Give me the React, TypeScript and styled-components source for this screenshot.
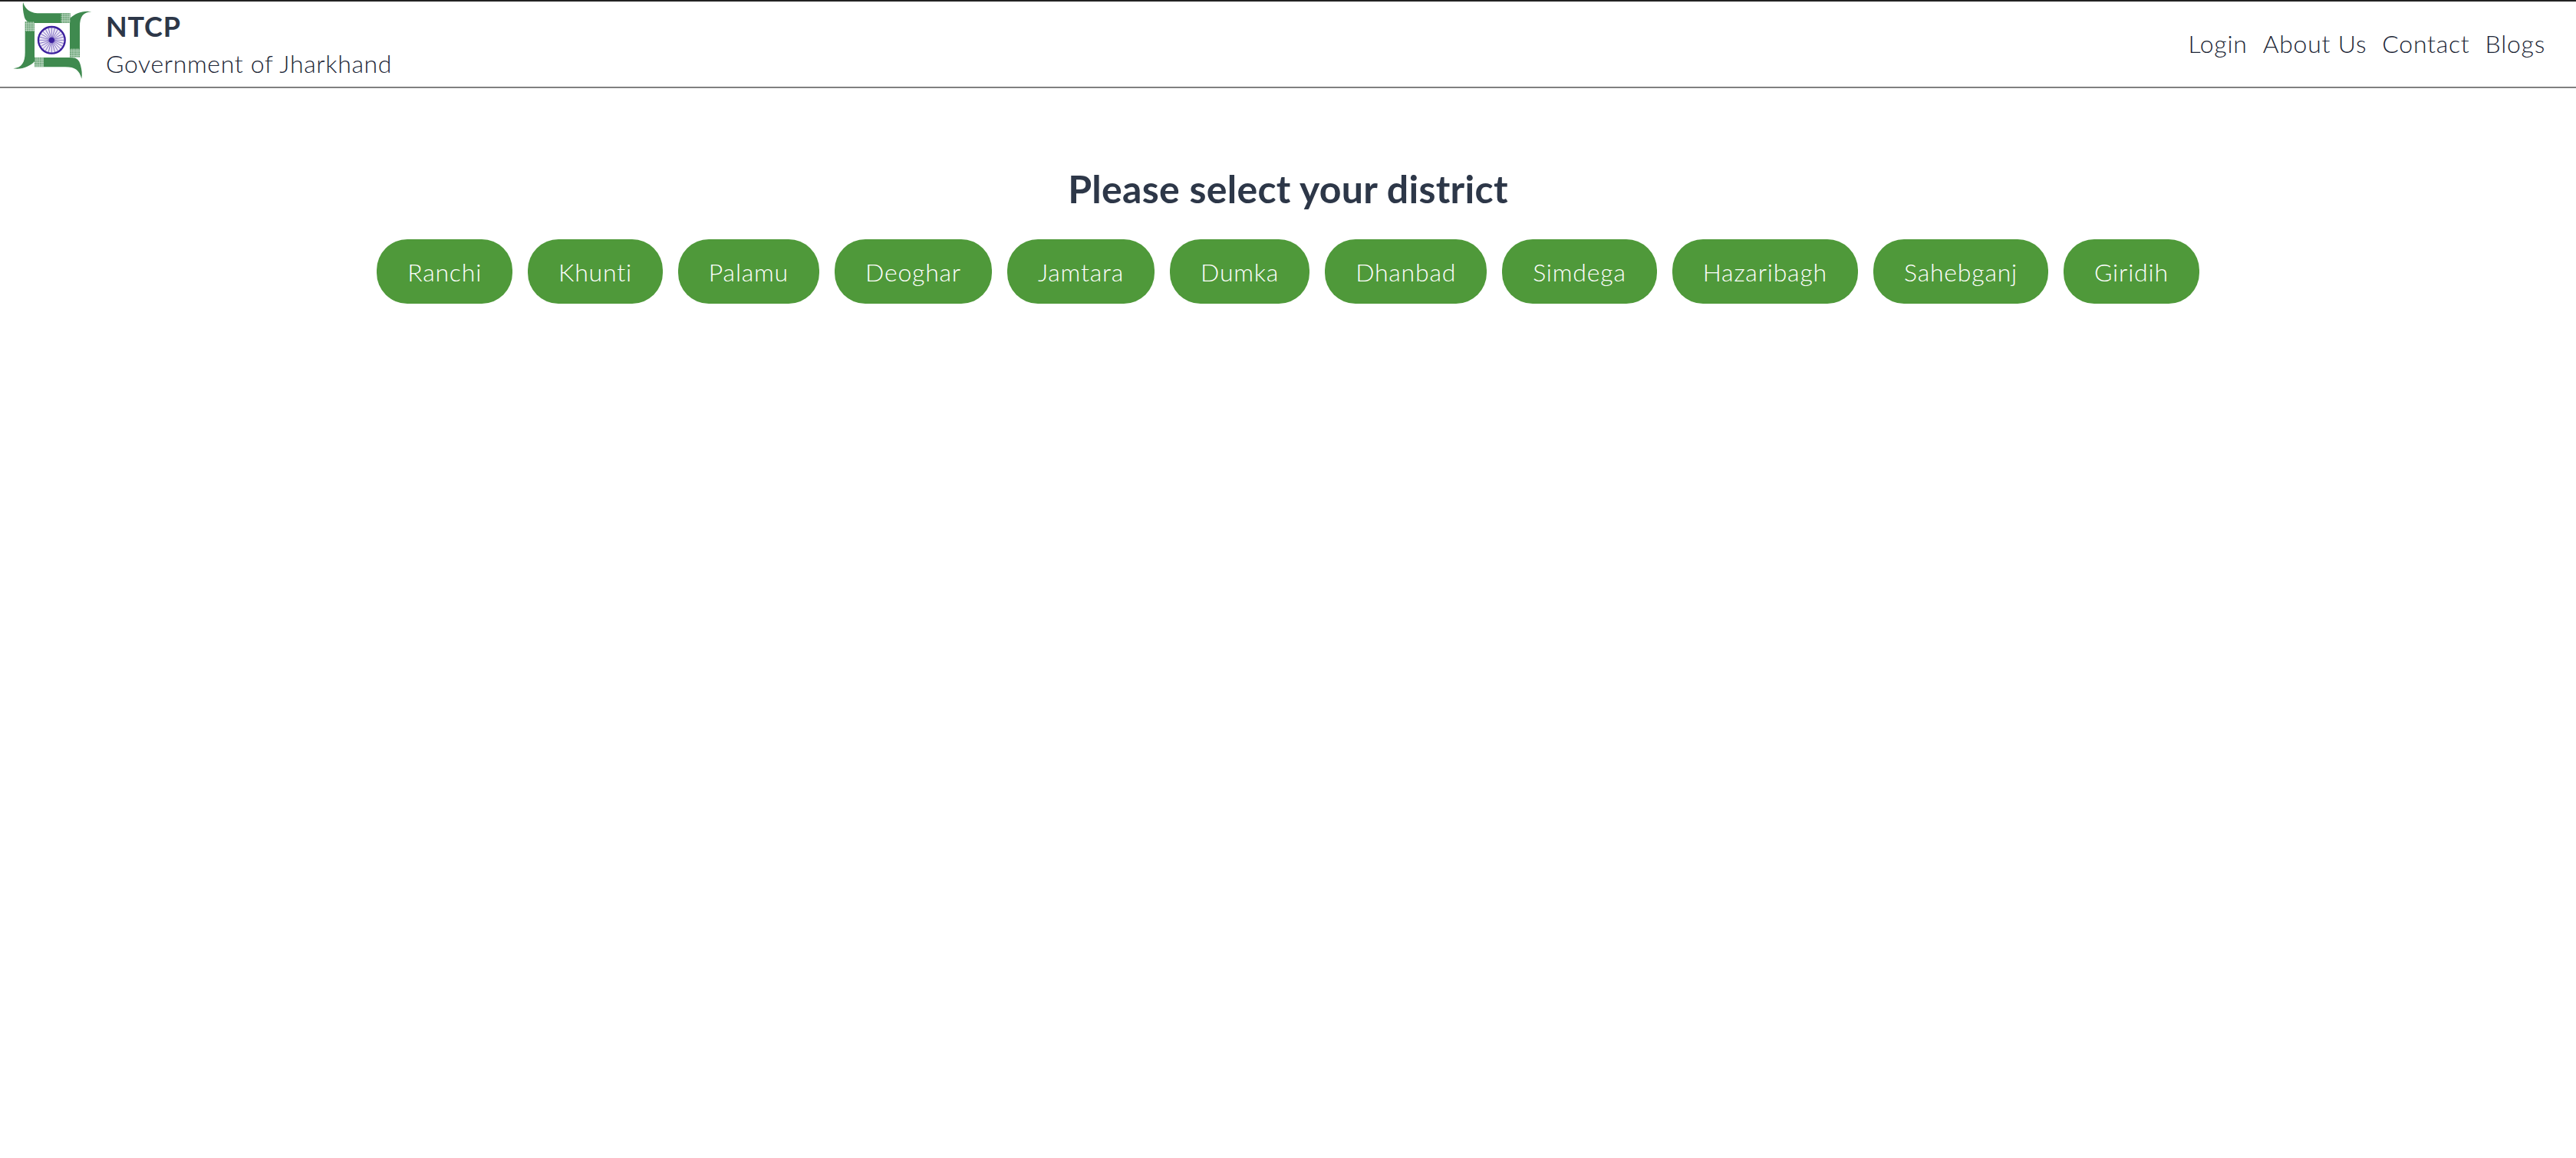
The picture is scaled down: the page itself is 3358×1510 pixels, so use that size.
import React from "react";
import styled, { createGlobalStyle } from "styled-components";

const Global = createGlobalStyle`
  html, body { margin: 0; padding: 0; background: #fff; }
  body { font-family: "Lato", "Liberation Sans", sans-serif; color: #2d3748; }
`;
const Page = styled.div`min-height: 1510px; background: #fff; display: flex; flex-direction: column;`;
const Header = styled.header`
  height: 115px; box-sizing: border-box; border-top: 2px solid #222; border-bottom: 2px solid #808080;
  display: flex; align-items: flex-start; justify-content: space-between; padding: 0 40px 0 10px;
`;
const Brand = styled.div`display: flex; align-items: flex-start; gap: 18px;`;
const BrandText = styled.div`display: flex; flex-direction: column; gap: 7px; padding-top: 10px;`;
const Title = styled.div`font-size: 36px; line-height: 44px; font-weight: 700; letter-spacing: 0.8px; color: #2d3748;`;
const Subtitle = styled.div`font-size: 32px; line-height: 40px; font-weight: 300; letter-spacing: 0.65px; color: #1c2636;`;
const Nav = styled.nav`display: flex; gap: 20px; padding-top: 35px;`;
const NavLink = styled.a`font-size: 32px; line-height: 40px; font-weight: 300; letter-spacing: 0.75px; color: #1c2636;`;
const Main = styled.main`display: flex; flex-direction: column; align-items: center; padding-top: 99px;`;
const Heading = styled.h1`margin: 0; font-size: 50px; line-height: 64px; font-weight: 700; letter-spacing: 0.3px; color: #2d3748;`;
const Row = styled.div`display: flex; gap: 20px; margin-top: 34px;`;
const Pill = styled.button`
  height: 84px; padding: 0 40px; border: 0; border-radius: 40px; background: #4f993a; color: #fff;
  font-family: inherit; font-size: 32px; font-weight: 300; letter-spacing: 0.8px;
`;
const plaids = [
  { x: 208, y: 52, w: 37, h: 38 },
  { x: 243, y: 190, w: 39, h: 36 },
  { x: 105, y: 225, w: 36, h: 37 },
  { x: 68, y: 85, w: 37, h: 38 },
];
const offsets = [6, 13, 20, 27, 33];
const Logo = () => (
  <svg width="110" height="110" viewBox="0 6 330 330">
    <g fill="#3f8a4f">
      <path d="M60 8 C70 40 90 52 130 52 L245 52 L245 90 L105 90 C85 90 70 85 65 65 C60 45 58 25 60 8 Z" />
      <path d="M328 46 C295 48 282 65 282 105 L282 225 L243 225 L243 72 C265 52 295 40 328 46 Z" />
      <path d="M289 308 C280 275 265 262 225 262 L105 262 L105 225 L250 225 C270 225 280 235 285 255 C290 275 292 290 289 308 Z" />
      <path d="M22 268 C55 265 68 245 68 205 L68 85 L105 85 L105 240 C90 258 55 274 22 268 Z" />
    </g>
    <g stroke="#fff" strokeWidth="2.5" opacity="0.75">
      {plaids.map((p, i) => (
        <g key={i}>
          {offsets.map((o) => (
            <React.Fragment key={o}>
              <line x1={p.x + o} y1={p.y} x2={p.x + o} y2={p.y + p.h} />
              <line x1={p.x} y1={p.y + o} x2={p.x + p.w} y2={p.y + o} />
            </React.Fragment>
          ))}
        </g>
      ))}
    </g>
    <circle cx="172" cy="157" r="52" fill="#ece8f6" stroke="#3b1f9e" strokeWidth="7" />
    <g stroke="#5a43b0" strokeWidth="2">
      {Array.from({ length: 12 }, (_, i) => (
        <line key={i} x1="172" y1="107" x2="172" y2="207" transform={`rotate(${i * 15} 172 157)`} />
      ))}
    </g>
    <circle cx="172" cy="157" r="11" fill="#3b1f9e" />
  </svg>
);
const districts = ["Ranchi","Khunti","Palamu","Deoghar","Jamtara","Dumka","Dhanbad","Simdega","Hazaribagh","Sahebganj","Giridih"];
export default function App() {
  return (
    <Page>
      <Global />
      <Header>
        <Brand>
          <Logo />
          <BrandText>
            <Title>NTCP</Title>
            <Subtitle>Government of Jharkhand</Subtitle>
          </BrandText>
        </Brand>
        <Nav>
          {["Login","About Us","Contact","Blogs"].map((n) => <NavLink key={n}>{n}</NavLink>)}
        </Nav>
      </Header>
      <Main>
        <Heading>Please select your district</Heading>
        <Row>{districts.map((d) => <Pill key={d}>{d}</Pill>)}</Row>
      </Main>
    </Page>
  );
}
